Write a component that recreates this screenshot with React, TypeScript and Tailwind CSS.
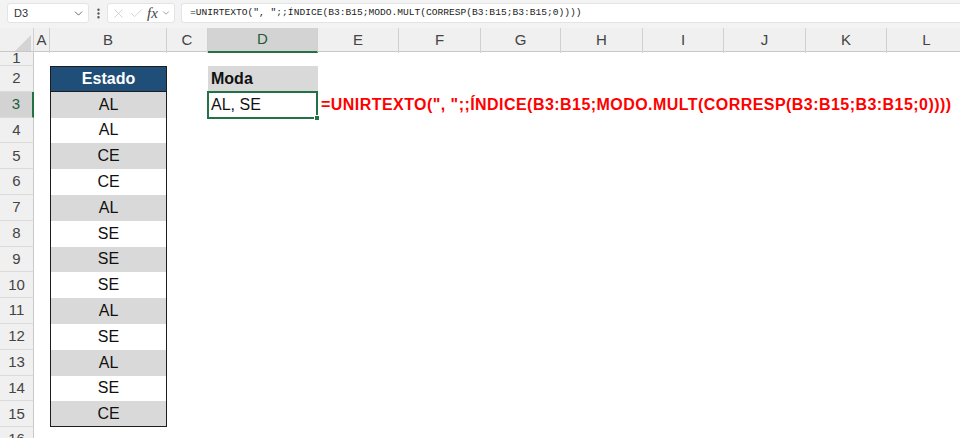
import { X, Check, ChevronDown, EllipsisVertical } from 'lucide-react'

const grid =
  'grid grid-cols-[34px_16px_117px_41px_110px_81px_82px_80px_82px_81px_82px_81px_80px]'

const letters = ['A', 'B', 'C', 'D', 'E', 'F', 'G', 'H', 'I', 'J', 'K', 'L']

const estados = ['AL', 'AL', 'CE', 'CE', 'AL', 'SE', 'SE', 'SE', 'AL', 'SE', 'AL', 'SE', 'CE']

const formula = '=UNIRTEXTO(", ";;ÍNDICE(B3:B15;MODO.MULT(CORRESP(B3:B15;B3:B15;0))))'

function FormulaBar() {
  return (
    <div className="flex h-[28px] items-start gap-0 bg-[#f3f3f3] pt-[3px] pl-[7px]">
      {/* Name box */}
      <div className="flex h-[20px] w-[82px] items-center justify-between rounded-[3px] border border-[#e4e4e4] bg-white pl-[6px] pr-[3px]">
        <span className="text-[11px] text-[#333]">D3</span>
        <ChevronDown className="h-[13px] w-[13px] text-[#555]" strokeWidth={1.6} />
      </div>
      <div className="flex h-[20px] w-[18px] items-center justify-center">
        <EllipsisVertical className="h-[13px] w-[13px] text-[#555]" strokeWidth={2.4} />
      </div>
      {/* Cancel / enter / fx */}
      <div className="flex h-[20px] w-[68px] items-center gap-[3px] rounded-[3px] border border-[#e4e4e4] bg-white pl-[3px]">
        <X className="h-[15px] w-[15px] text-[#c4c4c4]" strokeWidth={1.2} />
        <Check className="h-[15px] w-[15px] text-[#c4c4c4]" strokeWidth={1.2} />
        <span className="font-['Liberation_Serif',serif] text-[15px] italic leading-none text-[#444]">fx</span>
        <ChevronDown className="h-[10px] w-[10px] text-[#777]" strokeWidth={1.6} />
      </div>
      <div className="ml-[6px] flex h-[20px] flex-1 items-center rounded-l-[3px] border border-r-0 border-[#e4e4e4] bg-white pl-[8px]">
        <span className="whitespace-nowrap font-['Liberation_Mono',monospace] text-[9.6px] text-[#222]">
          {formula}
        </span>
      </div>
    </div>
  )
}

function ColumnHeaders() {
  return (
    <div className={`${grid} h-[24px] border-b border-[#c8c8c8] bg-[#f0f0f0]`}>
      <div className="relative border-r border-[#d0d0d0]">
        <div className="absolute right-[2px] bottom-[2px] h-0 w-0 border-t-[16px] border-l-[16px] border-t-transparent border-l-transparent border-b-0 border-r-[16px] border-r-[#d4d4d4]" />
      </div>
      {letters.map((l) => (
        <div
          key={l}
          className={`flex items-center justify-center border-r border-[#d0d0d0] text-[15px] ${
            l === 'D' ? 'border-b-2 border-b-[#217346] bg-[#d3d3d3] text-[#205c3b]' : 'text-[#444]'
          }`}
        >
          {l}
        </div>
      ))}
    </div>
  )
}

function RowHeader({ n, h }: { n: number; h: string }) {
  const sel = n === 3
  return (
    <div
      className={`flex items-center justify-center border-b border-[#dadada] text-[15px] ${h} ${
        sel ? 'border-r-2 border-r-[#217346] bg-[#d3d3d3] text-[#205c3b]' : 'border-r border-r-[#c8c8c8] bg-[#f0f0f0] text-[#444]'
      }`}
    >
      {n}
    </div>
  )
}

function Row({ n }: { n: number }) {
  const h = n === 1 ? 'h-[14px]' : 'h-[25.8px]'
  const idx = n - 3
  let bCell = <div />
  if (n === 2) {
    bCell = (
      <div className="flex items-center justify-center border-x border-t border-b border-[#1c1c1c] bg-[#1f4e78] text-[16px] font-bold text-white">
        Estado
      </div>
    )
  } else if (n >= 3 && n <= 15) {
    const gray = n % 2 === 1
    bCell = (
      <div
        className={`flex items-center justify-center border-x border-[#1c1c1c] text-[16px] text-[#111] ${
          gray ? 'bg-[#d9d9d9]' : 'bg-white'
        } ${n === 15 ? 'border-b' : ''}`}
      >
        {estados[idx]}
      </div>
    )
  }

  let dCell = <div />
  if (n === 2) {
    dCell = (
      <div className="flex items-center bg-[#d9d9d9] pl-[3px] text-[16px] font-bold text-[#111]">Moda</div>
    )
  } else if (n === 3) {
    dCell = (
      <div className="relative -mt-px -ml-px flex items-center border-2 border-[#217346] pl-[2px] text-[16px] text-[#111]">
        AL, SE
        <div className="absolute -right-[4px] -bottom-[4px] h-[6px] w-[6px] border border-white bg-[#217346]" />
      </div>
    )
  }

  return (
    <div className={`${grid} ${h}`}>
      <RowHeader n={n} h={h} />
      <div />
      {bCell}
      <div />
      {dCell}
      {n === 3 ? (
        <div className="flex items-center overflow-visible whitespace-nowrap pl-[3px] text-[16px] font-bold tracking-[0.45px] text-[#ff0000]">
          {formula}
        </div>
      ) : (
        <div />
      )}
      <div />
      <div />
      <div />
      <div />
      <div />
      <div />
      <div />
    </div>
  )
}

export default function App() {
  return (
    <div className="h-[438px] w-[960px] overflow-hidden bg-white font-['Liberation_Sans',Arial,sans-serif]">
      <FormulaBar />
      <ColumnHeaders />
      {Array.from({ length: 16 }, (_, i) => (
        <Row key={i} n={i + 1} />
      ))}
    </div>
  )
}
